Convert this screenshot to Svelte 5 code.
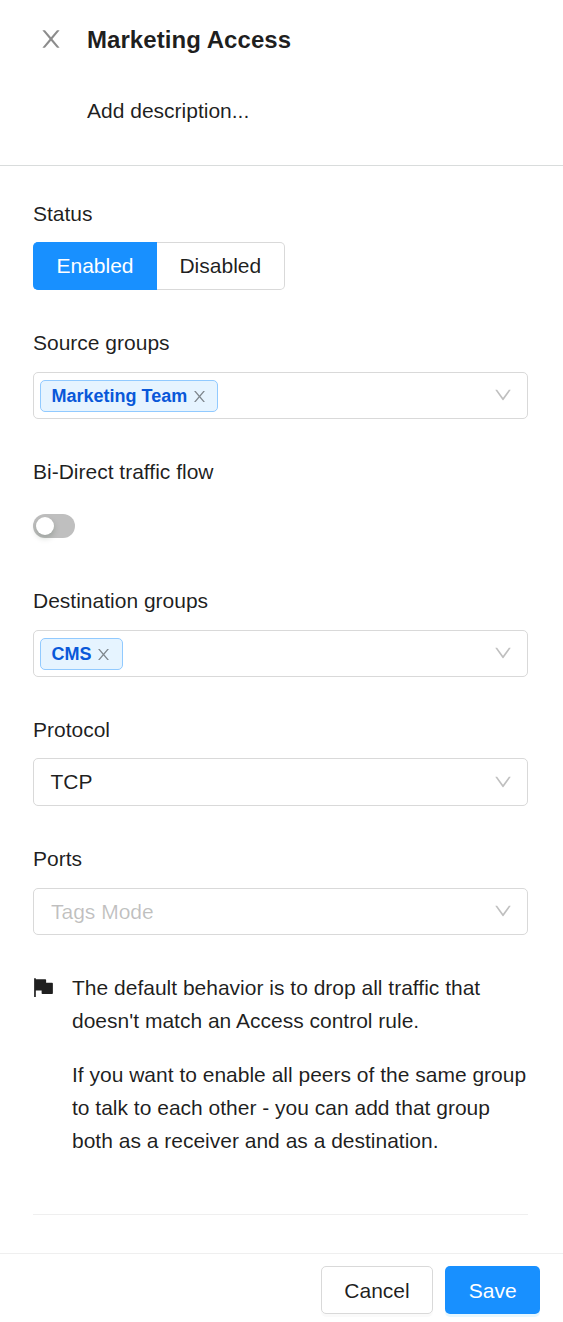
<script>
  const closePath = 'M563.8 512l262.5-312.9c4.4-5.2.7-13.1-6.1-13.1h-79.8c-4.7 0-9.2 2.1-12.3 5.7L511.6 449.8 295.1 191.7c-3-3.6-7.5-5.7-12.3-5.7H203c-6.8 0-10.5 7.9-6.1 13.1L459.4 512 196.9 824.9A7.95 7.95 0 00203 838h79.8c4.7 0 9.2-2.1 12.3-5.7l216.5-258.1 216.5 258.1c3 3.6 7.5 5.7 12.3 5.7h79.8c6.8 0 10.5-7.9 6.1-13.1L563.8 512z';
  const downPath = 'M884 256h-75c-5.1 0-9.9 2.5-12.9 6.6L512 654.2 227.9 262.6c-3-4.1-7.8-6.6-12.9-6.6h-75c-6.5 0-10.3 7.4-6.5 12.7l352.6 486.1c12.8 17.6 39 17.6 51.7 0l352.6-486.1c3.9-5.3.1-12.7-6.4-12.7z';
  const flagPath = 'M880 305H624V192c0-17.7-14.3-32-32-32H184v-40c0-4.4-3.6-8-8-8h-56c-4.4 0-8 3.6-8 8v784c0 4.4 3.6 8 8 8h56c4.4 0 8-3.6 8-8V640h248v113c0 17.7 14.3 32 32 32h416c17.7 0 32-14.3 32-32V337c0-17.7-14.3-32-32-32z';
  let enabled = $state(true);
  let bidirectional = $state(false);
</script>

{#snippet icon(path, size)}
  <svg width={size} height={size} viewBox="64 64 896 896" fill="currentColor" aria-hidden="true"><path d={path} /></svg>
{/snippet}

{#snippet tagSelect(name)}
  <div class="select multi">
    <span class="tag">{name}<span class="remove">{@render icon(closePath, 15)}</span></span>
    <span class="arrow">{@render icon(downPath, 18)}</span>
  </div>
{/snippet}

<div class="drawer">
  <header>
    <button class="close" aria-label="Close">{@render icon(closePath, 24)}</button>
    <div class="heading">
      <h1>Marketing Access</h1>
      <div class="description">Add description...</div>
    </div>
  </header>

  <main>
    <section class="field">
      <div class="label">Status</div>
      <div class="segments">
        <button class:active={enabled} onclick={() => (enabled = true)}>Enabled</button>
        <button class:active={!enabled} onclick={() => (enabled = false)}>Disabled</button>
      </div>
    </section>
    <section class="field">
      <div class="label">Source groups</div>
      {@render tagSelect('Marketing Team')}
    </section>
    <section class="field">
      <div class="label">Bi-Direct traffic flow</div>
      <div class="switch-row">
        <button class="switch" class:on={bidirectional} role="switch" aria-checked={bidirectional} aria-label="Bi-Direct traffic flow" onclick={() => (bidirectional = !bidirectional)}><span></span></button>
      </div>
    </section>
    <section class="field">
      <div class="label">Destination groups</div>
      {@render tagSelect('CMS')}
    </section>
    <section class="field">
      <div class="label">Protocol</div>
      <div class="select single">
        <span class="value">TCP</span>
        <span class="arrow">{@render icon(downPath, 18)}</span>
      </div>
    </section>
    <section class="field">
      <div class="label">Ports</div>
      <div class="select multi">
        <span class="placeholder">Tags Mode</span>
        <span class="arrow">{@render icon(downPath, 18)}</span>
      </div>
    </section>
    <div class="note">
      <span class="flag">{@render icon(flagPath, 21)}</span>
      <div>
        <p>The default behavior is to drop all traffic that doesn't match an Access control rule.</p>
        <p>If you want to enable all peers of the same group to talk to each other - you can add that group both as a receiver and as a destination.</p>
      </div>
    </div>
    <hr />
  </main>

  <footer>
    <button class="cancel">Cancel</button>
    <button class="save">Save</button>
  </footer>
</div>

<style>
  .drawer {
    display: flex;
    flex-direction: column;
    width: 563px;
    height: 1322px;
    overflow: hidden;
    box-sizing: border-box;
    background: #fff;
    color: rgba(0, 0, 0, 0.88);
    font: 21px/33px "Liberation Sans", Arial, sans-serif;
  }
  .drawer * { box-sizing: border-box; }
  svg { display: block; }
  button {
    margin: 0;
    padding: 0;
    border: 0;
    background: none;
    color: inherit;
    font: inherit;
    cursor: pointer;
  }
  header {
    display: flex;
    height: 166px;
    flex: none;
    padding: 21px 36px 0 39px;
    border-bottom: 1px solid #d9dcdc;
  }
  .close { align-self: flex-start; margin: 6px 24px 0 0; color: rgba(0, 0, 0, 0.45); }
  h1 { margin: 0; font-size: 24px; line-height: 38px; font-weight: 700; letter-spacing: 0.06px; }
  .description { margin-top: 35px; }
  main { flex: 1; padding: 31px 35px 0 33px; }
  .field { height: 129px; }
  .label { height: 45px; }
  .segments { display: flex; height: 48px; }
  .segments button {
    width: 128px;
    padding: 0 0.4px 2px 0;
    border: 1px solid #d9d9d9;
    border-left: 0;
    border-radius: 0 5px 5px 0;
  }
  .segments button:first-child { width: 124px; padding: 0 0 2px 1px; border-radius: 5px 0 0 5px; }
  .segments button.active { border-color: #1890ff; background: #1890ff; color: #fff; }
  .select {
    display: flex;
    align-items: center;
    justify-content: space-between;
    height: 48px;
    border: 1px solid #d9d9d9;
    border-radius: 5px;
    padding: 0 15px 0 17px;
  }
  .multi { height: 47px; margin-top: 1px; }
  .multi:has(.tag) { padding-left: 6px; }
  .multi .arrow { margin-bottom: 2px; }
  .single { padding-left: 16.5px; }
  .value { margin-bottom: 2px; }
  .arrow { color: rgba(0, 0, 0, 0.25); }
  .tag {
    display: flex;
    align-items: center;
    height: 32px;
    margin-top: 1px;
    padding: 0 10.6px 0 10.5px;
    border: 1px solid #91caff;
    border-radius: 5px;
    background: #e6f4ff;
    color: #0958d9;
    font-size: 18px;
    line-height: 30px;
    font-weight: 700;
  }
  .remove { margin-left: 4.5px; color: rgba(0, 0, 0, 0.45); }
  .placeholder { color: rgba(0, 0, 0, 0.25); }
  .switch-row { display: flex; align-items: center; height: 48px; padding-top: 4px; }
  .switch {
    width: 42px;
    height: 24px;
    padding: 3px;
    border-radius: 12px;
    background: #bfbfbf;
  }
  .switch span {
    display: block;
    width: 18px;
    height: 18px;
    border-radius: 50%;
    background: #fff;
    box-shadow: 0 3px 6px rgba(0, 35, 11, 0.2);
  }
  .switch.on { background: #1890ff; }
  .switch.on span { margin-left: 18px; }
  .note { display: flex; gap: 18px; }
  .flag { margin-top: 6px; }
  p { margin: 0 0 21px; }
  hr { height: 1px; margin: 36px 0 0; border: 0; background: #efefef; }
  footer {
    display: flex;
    flex: none;
    justify-content: flex-end;
    gap: 12px;
    height: 69px;
    padding: 12px 23px 0;
    border-top: 1px solid #efefef;
  }
  footer button { height: 48px; border-radius: 5px; }
  .cancel { width: 112px; border: 1px solid #d9d9d9; box-shadow: 0 3px 0 rgba(0, 0, 0, 0.02); }
  .save { width: 95px; padding-left: 0.6px; background: #1890ff; color: #fff; box-shadow: 0 3px 0 rgba(5, 175, 255, 0.1); }
</style>
